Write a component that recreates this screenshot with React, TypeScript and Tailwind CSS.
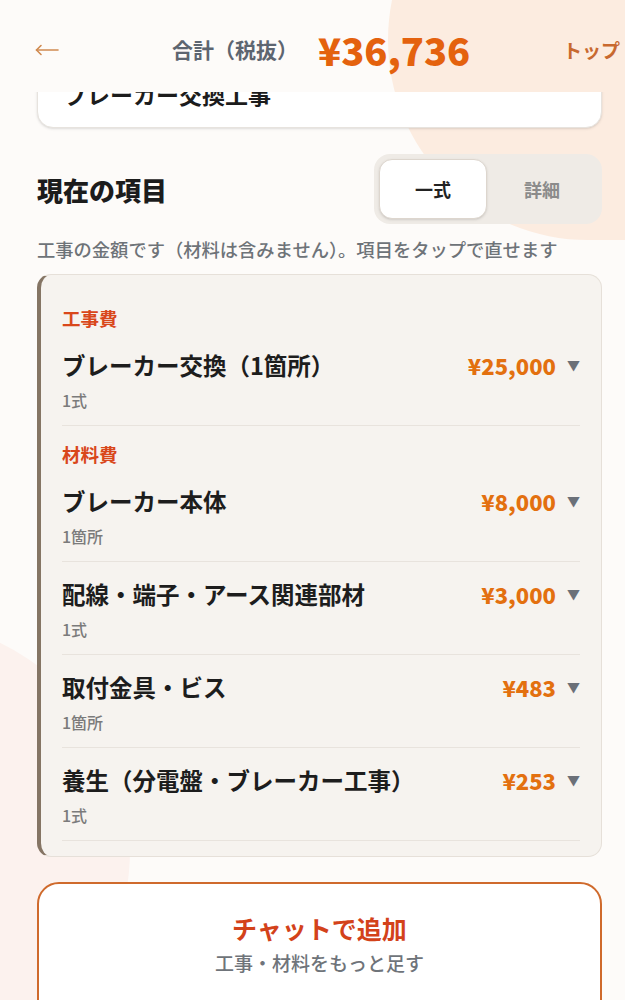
import React from 'react'

type Item = { name: string; unit: string; price: string }

const groups: { title: string; items: Item[] }[] = [
  {
    title: '工事費',
    items: [{ name: 'ブレーカー交換（1箇所）', unit: '1式', price: '¥25,000' }],
  },
  {
    title: '材料費',
    items: [
      { name: 'ブレーカー本体', unit: '1箇所', price: '¥8,000' },
      { name: '配線・端子・アース関連部材', unit: '1式', price: '¥3,000' },
      { name: '取付金具・ビス', unit: '1箇所', price: '¥483' },
      { name: '養生（分電盤・ブレーカー工事）', unit: '1式', price: '¥253' },
    ],
  },
]

const font = { fontFamily: '"Noto Sans CJK JP", "Noto Sans", sans-serif' }

function BackArrow() {
  return (
    <svg width="24" height="12" viewBox="0 0 24 12" fill="none" stroke="#d08a50" strokeWidth="1.6" strokeLinecap="round" strokeLinejoin="round">
      <path d="M23 6H1.5" />
      <path d="M6 1.5L1.5 6L6 10.5" />
    </svg>
  )
}

export default function App() {
  return (
    <div className="relative h-[1000px] w-full overflow-hidden bg-[#fdfbf9] text-[#1c1c1c]" style={font}>
      {/* background blobs */}
      <div className="absolute left-[388px] top-[-160px] h-[400px] w-[600px] rounded-full bg-[#fcece0]" />
      <div className="absolute left-[-330px] top-[620px] h-[460px] w-[460px] rounded-full bg-[#fcf2ee]" />

      {/* Header */}
      <header className="relative z-10 flex h-[92px] items-center pt-[8px] pl-[35px] pr-[5px]">
        <BackArrow />
        <div className="ml-[113px] flex items-center gap-[20px]">
          <span className="text-[21px] font-bold text-[#5d6570]">合計（税抜）</span>
          <span className="text-[38px] font-black leading-none text-[#e4620e]">¥36,736</span>
        </div>
        <span className="ml-auto text-[19px] font-bold text-[#c8692f]">トップ</span>
      </header>

      {/* Scroll area */}
      <div className="relative z-10 h-[908px] overflow-hidden pl-[37px] pr-[23px]">
        <div className="-mt-[32px] rounded-[16px] border border-[#e7e3de] bg-white px-[26px] py-[18px] shadow-sm">
          <p className="text-[23px] font-bold leading-[30px]">ブレーカー交換工事</p>
        </div>

        <div className="mt-[26px] flex items-center justify-between">
          <h2 className="text-[26px] font-black">現在の項目</h2>
          <div className="flex rounded-[16px] bg-[#efebe6] p-[5px]">
            <button className="h-[60px] w-[108px] rounded-[13px] border border-[#ddd6ce] bg-white text-[18px] font-bold text-[#222] shadow-sm">
              一式
            </button>
            <button className="h-[60px] w-[110px] text-[18px] font-bold text-[#8b8b8b]">詳細</button>
          </div>
        </div>

        <p className="mt-[15px] whitespace-nowrap text-[18.3px] font-medium leading-[20px] text-[#6e7378]">
          工事の金額です（材料は含みません）。項目をタップで直せます
        </p>

        <div className="mt-[15px] rounded-[14px] border border-l-4 border-[#e6e0d9] border-l-[#857564] bg-[#f6f3ef] px-[21px] pt-[15px] pb-[15px]">
          {groups.map(g => (
            <div key={g.title}>
              <div className="pt-[16px] pb-[3px] text-[18.5px] font-bold leading-[24px] text-[#d9471b]">{g.title}</div>
              {g.items.map(it => (
                <div key={it.name} className="border-b border-[#e8e3dd] pt-[17px] pb-[14px]">
                  <div className="flex h-[30px] items-center justify-between">
                    <span className="text-[23.5px] font-bold leading-[30px] text-[#1d1d1d]">{it.name}</span>
                    <span className="flex items-center gap-[11px] leading-[30px]">
                      <span className="text-[22px] font-black leading-[30px] text-[#e3700f]">{it.price}</span>
                      <span className="text-[13px] leading-[30px] text-[#6b7078]">▼</span>
                    </span>
                  </div>
                  <div className="mt-[9px] text-[16px] font-medium leading-[22px] text-[#7b7b7b]">{it.unit}</div>
                </div>
              ))}
            </div>
          ))}
        </div>

        <button className="mt-[25px] flex h-[160px] w-full flex-col items-center rounded-[22px] border-2 border-[#cf6a2c] bg-white pt-[27px]">
          <span className="text-[25px] font-bold leading-[34px] text-[#d3421a]">チャットで追加</span>
          <span className="mt-[5px] text-[19px] font-medium leading-[26px] text-[#6f747a]">工事・材料をもっと足す</span>
        </button>
      </div>
    </div>
  )
}
